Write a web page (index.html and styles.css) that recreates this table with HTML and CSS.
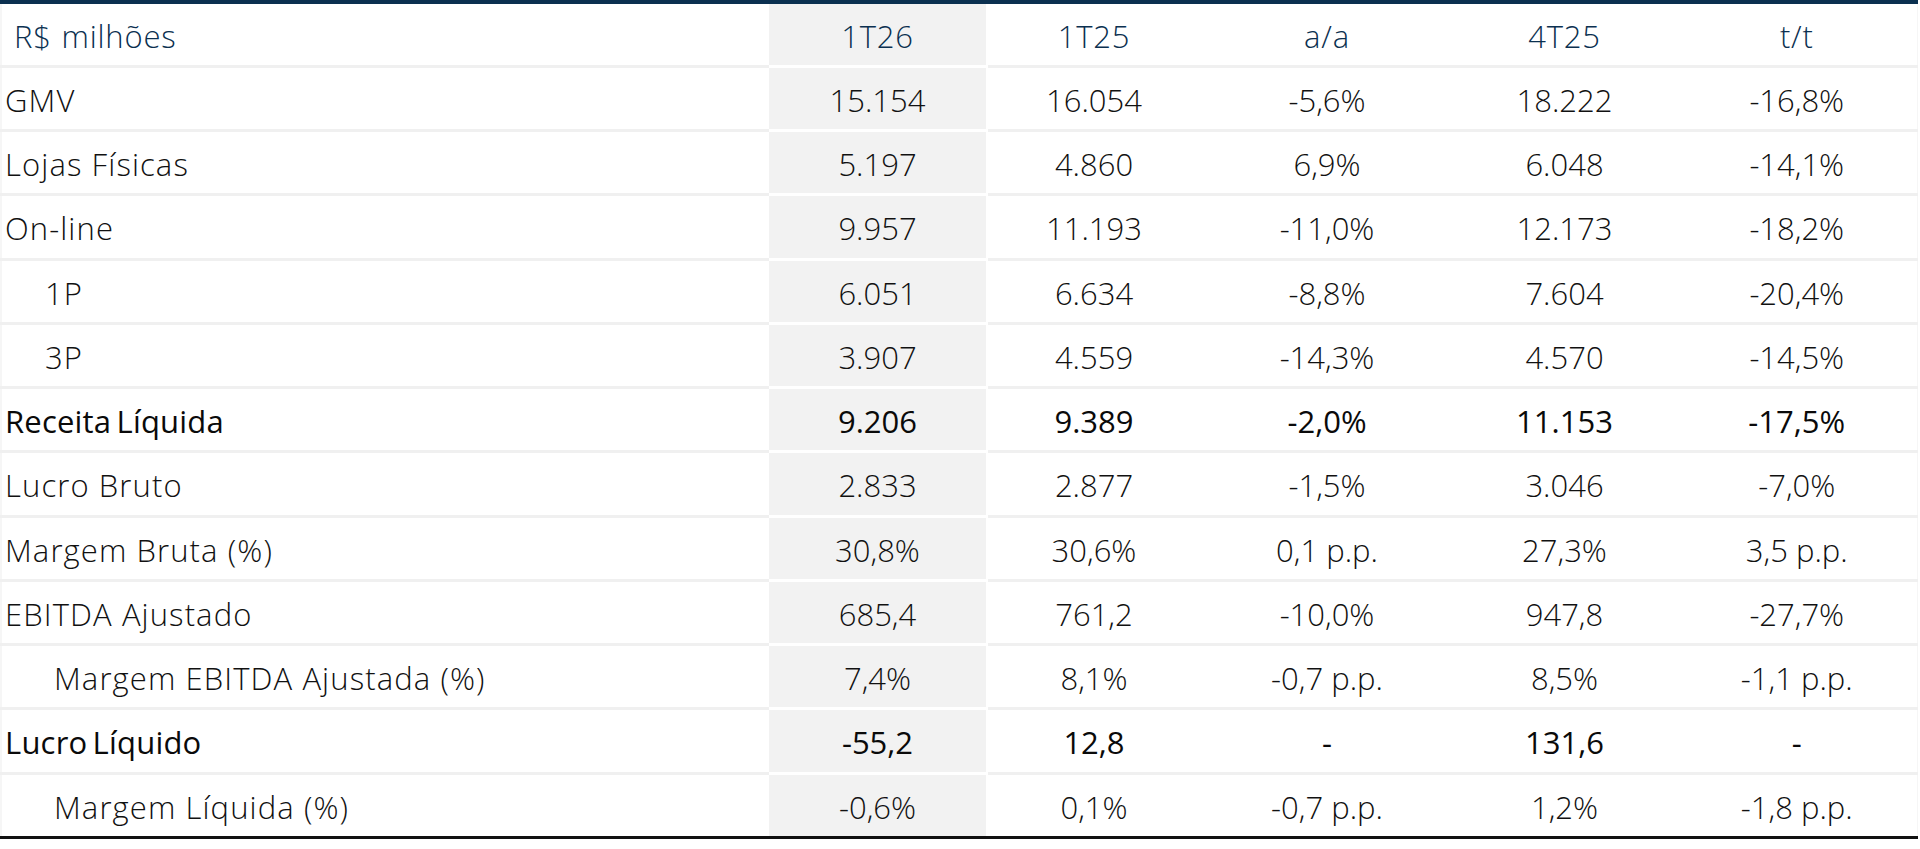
FILE: index.html
```html
<!DOCTYPE html>
<html lang="pt-BR">
<head>
<meta charset="utf-8">
<title>Destaques financeiros</title>
<link rel="stylesheet" href="styles.css">
</head>
<body>
<table class="fin">
  <colgroup>
    <col class="c-label"><col class="c-1t26"><col class="c-1t25"><col class="c-aa"><col class="c-4t25"><col class="c-tt">
  </colgroup>
  <thead>
    <tr>
      <th class="lbl head-lbl">R$ milhões</th>
      <th class="hl">1T26</th>
      <th>1T25</th>
      <th>a/a</th>
      <th>4T25</th>
      <th>t/t</th>
    </tr>
  </thead>
  <tbody>
    <tr><td class="lbl">GMV</td><td class="hl">15.154</td><td>16.054</td><td>-5,6%</td><td>18.222</td><td>-16,8%</td></tr>
    <tr><td class="lbl">Lojas Físicas</td><td class="hl">5.197</td><td>4.860</td><td>6,9%</td><td>6.048</td><td>-14,1%</td></tr>
    <tr><td class="lbl">On-line</td><td class="hl">9.957</td><td>11.193</td><td>-11,0%</td><td>12.173</td><td>-18,2%</td></tr>
    <tr><td class="lbl ind1">1P</td><td class="hl">6.051</td><td>6.634</td><td>-8,8%</td><td>7.604</td><td>-20,4%</td></tr>
    <tr><td class="lbl ind1">3P</td><td class="hl">3.907</td><td>4.559</td><td>-14,3%</td><td>4.570</td><td>-14,5%</td></tr>
    <tr class="strong"><td class="lbl">Receita Líquida</td><td class="hl">9.206</td><td>9.389</td><td>-2,0%</td><td>11.153</td><td>-17,5%</td></tr>
    <tr><td class="lbl">Lucro Bruto</td><td class="hl">2.833</td><td>2.877</td><td>-1,5%</td><td>3.046</td><td>-7,0%</td></tr>
    <tr><td class="lbl">Margem Bruta (%)</td><td class="hl">30,8%</td><td>30,6%</td><td>0,1 p.p.</td><td>27,3%</td><td>3,5 p.p.</td></tr>
    <tr><td class="lbl">EBITDA Ajustado</td><td class="hl">685,4</td><td>761,2</td><td>-10,0%</td><td>947,8</td><td>-27,7%</td></tr>
    <tr><td class="lbl ind2">Margem EBITDA Ajustada (%)</td><td class="hl">7,4%</td><td>8,1%</td><td>-0,7 p.p.</td><td>8,5%</td><td>-1,1 p.p.</td></tr>
    <tr class="strong"><td class="lbl">Lucro Líquido</td><td class="hl">-55,2</td><td>12,8</td><td>-</td><td>131,6</td><td>-</td></tr>
    <tr class="last"><td class="lbl ind2">Margem Líquida (%)</td><td class="hl">-0,6%</td><td>0,1%</td><td>-0,7 p.p.</td><td>1,2%</td><td>-1,8 p.p.</td></tr>
  </tbody>
</table>
</body>
</html>
```

FILE: styles.css
```css
html, body {
  margin: 0;
  padding: 0;
  background: #ffffff;
}

body {
  font-family: "Open Sans", "Noto Sans", sans-serif;
  font-weight: 300;
  font-size: 31px;
  color: #111111;
}

.fin {
  width: 1916px;
  border-collapse: collapse;
  table-layout: fixed;
  border-top: 4px solid #0b3050;
  border-bottom: 3px solid #111111;
}

.c-label { width: 767px; }
.c-1t26 { width: 219px; }
.c-1t25 { width: 214px; }
.c-aa { width: 252px; }
.c-4t25 { width: 223px; }
.c-tt { width: 241px; }

.fin th,
.fin td {
  height: 64.25px;
  padding: 3px 0 0 0;
  box-sizing: border-box;
  text-align: center;
  vertical-align: middle;
  border-bottom: 3px solid #f0f0f0;
  border-left: 2px solid #ffffff;
  border-right: 1px solid #f6f6f6;
  white-space: nowrap;
}

.fin th {
  font-weight: 300;
  color: #0b3050;
  letter-spacing: 0.8px;
}

.fin .lbl {
  text-align: left;
  padding-left: 3px;
  border-left: 2px solid #f6f6f6;
  letter-spacing: 1.1px;
  word-spacing: 0;
}

.fin .head-lbl {
  padding-left: 12px;
  letter-spacing: 0.8px;
  word-spacing: 1px;
}

.fin .ind1 { padding-left: 43px; }
.fin .ind2 { padding-left: 52px; }

.fin .hl {
  background: #f2f2f2;
  border-left: 2px solid #ffffff;
  border-right: 2px solid #ffffff;
  border-bottom: 3px solid #ffffff;
}

.fin tr.last td {
  border-bottom: none;
}

.fin tr.strong td {
  font-weight: 400;
  color: #0a0a0a;
}

.fin tr.strong .lbl {
  letter-spacing: 0.2px;
  word-spacing: -3px;
}
```
